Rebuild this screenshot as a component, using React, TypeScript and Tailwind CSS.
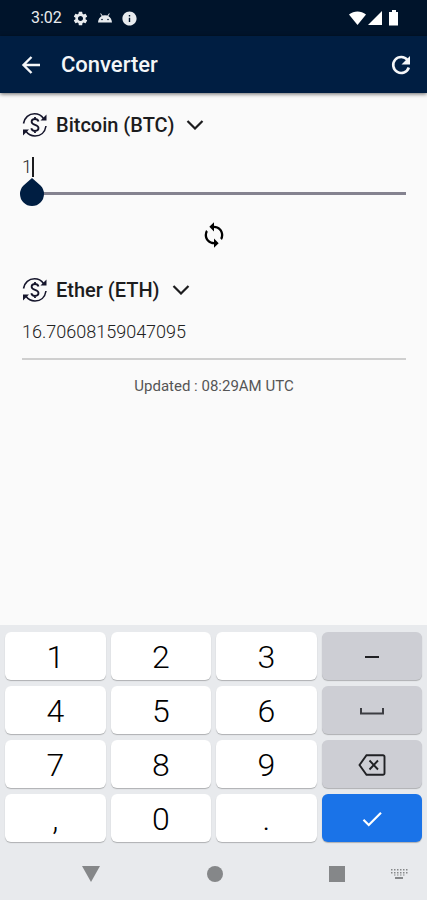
import { useState } from 'react';
import type { ReactNode } from 'react';
import { MdCheck, MdInfo, MdLoop, MdSettings } from 'react-icons/md';

const currencies = ['Bitcoin (BTC)', 'Ether (ETH)'];

const ExchangeIcon = () => (
  <svg viewBox="0 0 26 26" className="h-[26px] w-[26px] shrink-0" fill="none" stroke="#15152b" strokeWidth="1.6">
    <path d="M1.500 11.500C2.500 5.500 7 1.800 12.500 1.800c4 0 7 1.800 9 4.700" />
    <path d="M24 14C23 20.500 18.500 24 13 24c-4 0-7-1.800-9-4.700" />
    <path d="M24.500 2.500V8.500H18.500Z" fill="#15152b" stroke="none" />
    <path d="M1 23.500V17.500H7Z" fill="#15152b" stroke="none" />
    <path d="M16.500 9.500C16 7.800 14.800 7 13 7c-2 0-3.400 1-3.400 2.800 0 1.900 1.600 2.500 3.400 3.100 1.900.6 3.500 1.300 3.500 3.200 0 1.800-1.500 2.900-3.500 2.900s-3.300-.9-3.700-2.700M13 5v2M13 19v2" strokeWidth="1.800" />
  </svg>
);

const StatusBar = () => (
  <div className="flex h-9 items-center bg-[#00142b] pl-[31px] pr-7 text-[#e8ebee]">
    <span className="text-base">3:02</span>
    <MdSettings className="ml-[10px] h-[17px] w-[17px]" />
    <svg viewBox="0 0 16 10" className="ml-2 h-[10px] w-4" fill="currentColor">
      <path d="M1 9.500C1.200 6.500 2.600 4.300 4.700 3L3.200.7l.7-.5 1.600 2.400a7.500 7.500 0 0 1 5 0L12.100.2l.7.5L11.300 3c2.100 1.300 3.500 3.500 3.700 6.500Z" />
      <circle cx="5" cy="6.500" r=".8" fill="#00142b" />
      <circle cx="11" cy="6.500" r=".8" fill="#00142b" />
    </svg>
    <MdInfo className="ml-2 h-[17px] w-[17px]" />
    <svg viewBox="0 0 50 16" className="ml-auto h-4 w-[50px] text-white" fill="currentColor">
      <path d="M0 4.500C5 .4 12 .4 17 4.500L8.500 15Z" />
      <path d="M33 1v14H19Z" />
      <path d="M41 2h2V0h4v2h2v13.500h-9V2Z" />
    </svg>
  </div>
);

const AppBar = () => (
  <header className="relative flex h-[57px] items-center bg-[#001e42] pl-[19px] pr-[13px] text-[#f4f6f8] shadow-[0_1px_4px_rgba(0,0,0,0.6)]">
    <button aria-label="Back">
      <svg viewBox="0 0 24 24" className="h-6 w-6" fill="none" stroke="currentColor" strokeWidth="2.400">
        <path d="M21 12H4.500M12.500 4 4.500 12l8 8" />
      </svg>
    </button>
    <h1 className="ml-[18px] text-[22px] font-medium">Converter</h1>
    <button aria-label="Refresh" className="ml-auto">
      <svg viewBox="0 0 26 26" className="h-[26px] w-[26px]" fill="none" stroke="currentColor" strokeWidth="2.600">
        <path d="M19.500 8A8 8 0 1 0 20.800 15.500" />
        <path d="M22 4v8.500h-8.500Z" fill="currentColor" stroke="none" />
      </svg>
    </button>
  </header>
);

type CurrencySelectProps = {
  label: string;
  value: string;
  onChange: (value: string) => void;
};

const CurrencySelect = ({ label, value, onChange }: CurrencySelectProps) => (
  <div className="flex h-8 items-center gap-2">
    <ExchangeIcon />
    <div className="relative flex items-center">
      <select
        aria-label={label}
        value={value}
        onChange={(e) => onChange(e.target.value)}
        className="appearance-none bg-transparent pr-[30px] text-xl font-medium text-[#1c1c1e] outline-none field-sizing-content"
      >
        {currencies.map((currency) => (
          <option key={currency}>{currency}</option>
        ))}
      </select>
      <svg
        viewBox="0 0 18 10"
        className="pointer-events-none absolute right-0 h-[10px] w-[18px]"
        fill="none"
        stroke="#1c1c1e"
        strokeWidth="2.2"
      >
        <path d="M1.500 1 9 8.500 16.500 1" />
      </svg>
    </div>
  </div>
);

const SpaceIcon = () => (
  <svg viewBox="0 0 24 8" className="h-2 w-6" fill="none" stroke="#3c3d42" strokeWidth="2">
    <path d="M1 1v5.500h22V1" />
  </svg>
);

const BackspaceIcon = () => (
  <svg viewBox="0 0 28 22" className="h-[22px] w-7" fill="none" stroke="#202124" strokeWidth="1.900">
    <path d="M8.500 1.200H25a1.500 1.500 0 0 1 1.500 1.500v16.600a1.500 1.500 0 0 1-1.500 1.500H8.500L1.500 11Z" />
    <path d="M11.500 6.500l8.500 9M20 6.500l-8.500 9" />
  </svg>
);

const KeyboardIcon = () => (
  <svg viewBox="0 0 18 12" className="h-3 w-[18px]" fill="#858789">
    {[0, 3, 6, 9, 12, 15].map((x) => (
      <g key={x}>
        <rect x={x + 1} y="1" width="1.500" height="1.500" />
        <rect x={x + 1} y="4" width="1.500" height="1.500" />
        {x > 0 && x < 15 && <rect x={x + 1} y="6.500" width="1.500" height="1" />}
      </g>
    ))}
    <rect x="5" y="9" width="8" height="2" />
  </svg>
);

const keys: { id: string; face: ReactNode; tone: string }[] = [
  { id: '1', face: '1', tone: 'bg-white' },
  { id: '2', face: '2', tone: 'bg-white' },
  { id: '3', face: '3', tone: 'bg-white' },
  { id: 'Minus', face: <span className="h-[2px] w-[14px] bg-[#202124]" />, tone: 'bg-[#cdced4]' },
  { id: '4', face: '4', tone: 'bg-white' },
  { id: '5', face: '5', tone: 'bg-white' },
  { id: '6', face: '6', tone: 'bg-white' },
  { id: 'Space', face: <SpaceIcon />, tone: 'bg-[#cdced4]' },
  { id: '7', face: '7', tone: 'bg-white' },
  { id: '8', face: '8', tone: 'bg-white' },
  { id: '9', face: '9', tone: 'bg-white' },
  { id: 'Backspace', face: <BackspaceIcon />, tone: 'bg-[#cdced4]' },
  { id: ',', face: ',', tone: 'bg-white' },
  { id: '0', face: '0', tone: 'bg-white' },
  { id: '.', face: '.', tone: 'bg-white' },
  { id: 'Done', face: <MdCheck className="h-[26px] w-[26px] text-white" />, tone: 'bg-[#1a73e8]' },
];

const Keypad = () => (
  <div className="bg-[#e8eaed]">
    <div className="grid grid-cols-4 gap-x-[5px] gap-y-[6px] px-[5px] pt-[7px]">
      {keys.map((key) => (
        <button
          key={key.id}
          aria-label={key.id}
          className={`flex h-12 items-center justify-center rounded-md pt-[2px] text-[32px] font-light text-black shadow-[0_1px_1px_rgba(0,0,0,0.25)] ${key.tone}`}
        >
          {key.face}
        </button>
      ))}
    </div>
    <div className="flex h-[58px] items-center pb-px pl-[82px] pr-[19px] pt-[7px]">
      <button aria-label="Hide keyboard">
        <svg viewBox="0 0 18 16" className="h-4 w-[18px]" fill="#858789">
          <path d="M0 0h18L9 16Z" />
        </svg>
      </button>
      <button aria-label="Home" className="mx-auto h-4 w-4 rounded-full bg-[#858789]" />
      <button aria-label="Recent apps" className="mr-[45px] h-4 w-4 bg-[#858789]" />
      <button aria-label="Switch keyboard">
        <KeyboardIcon />
      </button>
    </div>
  </div>
);

const App = () => {
  const [from, setFrom] = useState('Bitcoin (BTC)');
  const [to, setTo] = useState('Ether (ETH)');
  const [amount, setAmount] = useState('1');

  return (
    <div className="flex min-h-screen flex-col bg-[#fafafa] font-[Roboto,'Noto_Sans',sans-serif]">
      <StatusBar />
      <AppBar />

      <main className="flex grow flex-col pl-[22px] pr-[21px] pt-4">
        <CurrencySelect label="From currency" value={from} onChange={setFrom} />
        <div className="relative mt-3 border-b-[3px] border-[#84828f]">
          <input
            aria-label="Amount"
            inputMode="decimal"
            value={amount}
            onChange={(e) => setAmount(e.target.value)}
            className="block h-[39px] w-full bg-transparent pb-3 text-lg font-light text-[#222222] caret-transparent outline-none"
          />
          {/* text cursor and its drag handle */}
          <span className="absolute left-[10px] top-1 h-5 w-[2px] bg-[#1c1c1e]" />
          <svg viewBox="0 0 24 28" className="absolute -left-[2px] top-[25px] h-7 w-6" fill="#001e42">
            <path d="M12 0l8.500 7.500a12 12 0 1 1-17 0Z" />
          </svg>
        </div>

        <button aria-label="Swap currencies" className="mt-[26px] self-center">
          <MdLoop className="h-7 w-7 text-black" />
        </button>

        <div className="mt-[25px]">
          <CurrencySelect label="To currency" value={to} onChange={setTo} />
        </div>
        <output className="mt-3 block border-b-2 border-[#cfcfcf] pb-3 text-lg font-light leading-7 text-[#222222]">
          16.70608159047095
        </output>
        <p className="mt-[14px] text-center text-[15px] leading-6 text-[#555555]">Updated : 08:29AM UTC</p>
      </main>

      <Keypad />
    </div>
  );
};

export default App;
